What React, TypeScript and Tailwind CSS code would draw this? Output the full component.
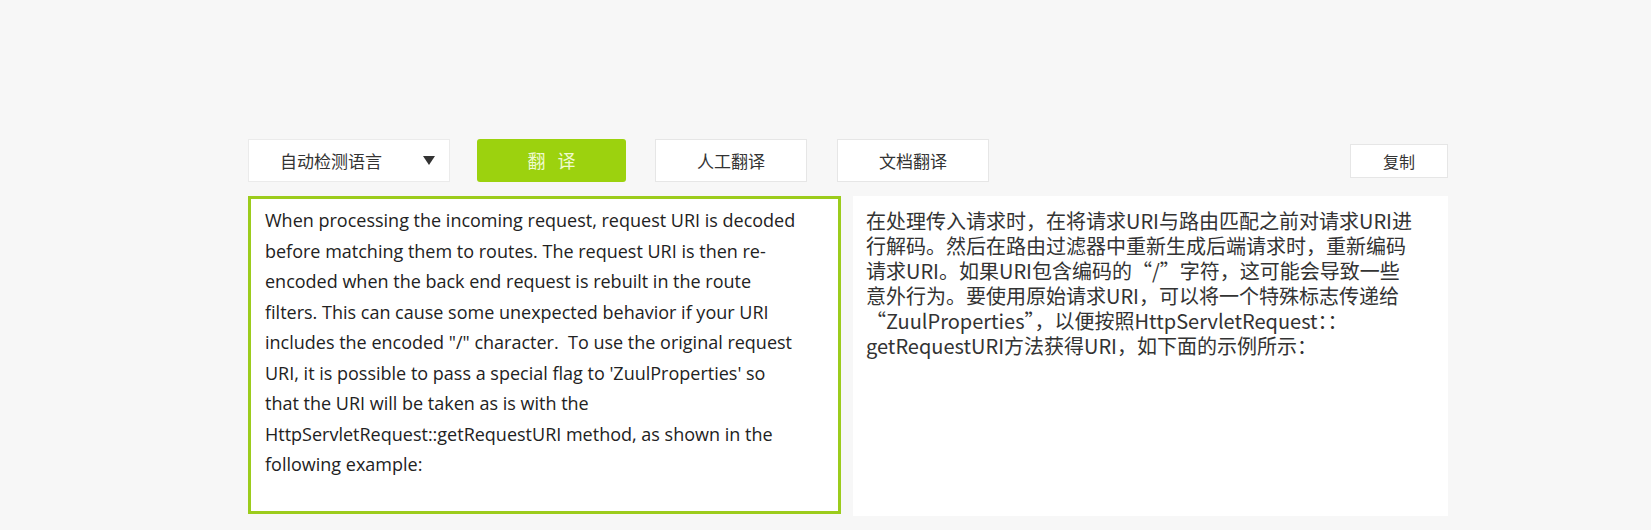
export default function App() {
  const source =
    "When processing the incoming request, request URI is decoded before matching them to routes. The request URI is then re-encoded when the back end request is rebuilt in the route filters. This can cause some unexpected behavior if your URI includes the encoded \"/\" character.  To use the original request URI, it is possible to pass a special flag to 'ZuulProperties' so that the URI will be taken as is with the HttpServletRequest::getRequestURI method, as shown in the following example:";

  const result =
    "在处理传入请求时，在将请求URI与路由匹配之前对请求URI进行解码。然后在路由过滤器中重新生成后端请求时，重新编码请求URI。如果URI包含编码的“/”字符，这可能会导致一些意外行为。要使用原始请求URI，可以将一个特殊标志传递给\u200B“ZuulProperties”，以便按照HttpServletRequest：：getRequestURI方法获得URI，如下面的示例所示：";

  return (
    <div
      className="min-h-[530px] w-full bg-[#f7f7f7] pt-[139px] pl-[248px]"
      style={{ fontFamily: '"Noto Sans CJK SC", "Noto Sans", sans-serif' }}
    >
      <div className="w-[1200px]">
        {/* toolbar */}
        <div className="flex h-[43px] items-center">
          <div className="flex h-[43px] w-[202px] items-center justify-between border border-[#ebebeb] bg-white pl-[31px] pr-[14px] text-[17px] text-[#333]">
            <span>自动检测语言</span>
            <span className="h-0 w-0 border-x-[6px] border-t-[9px] border-x-transparent border-t-[#333]" />
          </div>
          <button className="ml-[27px] flex h-[43px] w-[149px] items-center justify-center rounded-[3px] bg-[#9cd20e] pl-[4px] text-[18px] tracking-[4px] text-[#effad0]">
            翻 译
          </button>
          <button className="ml-[29px] flex h-[43px] w-[152px] items-center justify-center border border-[#e6e6e6] bg-white text-[17px] text-[#333]">
            人工翻译
          </button>
          <button className="ml-[30px] flex h-[43px] w-[152px] items-center justify-center border border-[#e6e6e6] bg-white text-[17px] text-[#333]">
            文档翻译
          </button>
          <button className="ml-auto flex h-[34px] w-[98px] items-center justify-center border border-[#e6e6e6] bg-white text-[16px] text-[#333]">
            复制
          </button>
        </div>

        {/* panels */}
        <div className="mt-[14px] flex gap-[12px]">
          <div className="h-[318px] w-[593px] border-[3px] border-[#9ccc1c] bg-white pt-[6px] pr-[40px] pl-[14px]">
            <p
              className="whitespace-pre-wrap text-[18px] leading-[30.5px] text-[#222]"
              style={{ fontFamily: '"Open Sans", "Noto Sans", sans-serif' }}
            >
              {source}
            </p>
          </div>
          <div className="h-[320px] w-[595px] bg-white pt-[12px] pr-[31px] pl-[13px]">
            <p className="text-[20px] leading-[25px] text-[#333]">{result}</p>
          </div>
        </div>
      </div>
    </div>
  );
}
